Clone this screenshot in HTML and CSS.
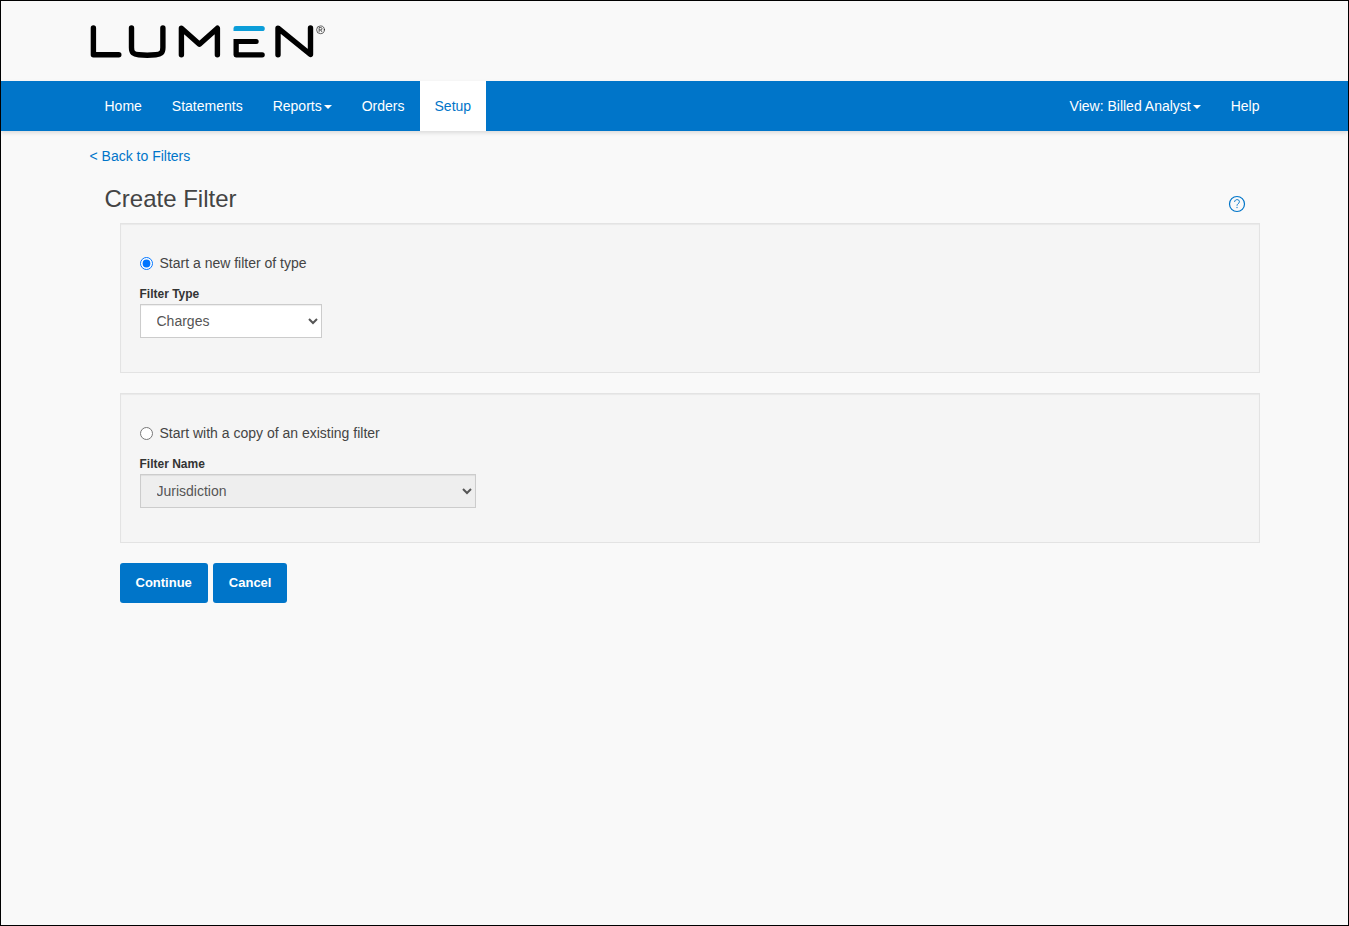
FILE: index.html
```html
<!DOCTYPE html>
<html lang="en">
<head>
<meta charset="utf-8">
<meta name="viewport" content="width=device-width, initial-scale=1">
<title>Create Filter</title>
<link rel="stylesheet" href="styles.css">
</head>
<body class="page">
<header class="masthead">
  <div class="container">
    <a class="brand" href="#" aria-label="Lumen">
      <svg class="brand-logo" width="236" height="38" viewBox="90 22 236 38" fill="none" stroke="#000" stroke-width="5.4" stroke-linecap="round" stroke-linejoin="round">
        <path d="M93.4 28V54.8H118.8"/>
        <path d="M131.5 28V47.5C131.5 53 133.7 54.2 138.7 54.8C144.2 55.4 150.2 55.4 155.7 54.8C160.7 54.2 162.9 53 162.9 47.5V28"/>
        <path d="M181.4 54.7V28.2L199.4 44.3L217.4 28.2V54.7"/>
        <path stroke="none" fill="#000" d="M233.5 39H256.2A2.4 2.4 0 0 1 256.2 44H238.8V52.2H262.2A2.6 2.6 0 0 1 262.2 57.4H236A2.5 2.5 0 0 1 233.5 55Z"/>
        <path stroke="none" fill="#0c9ed9" d="M236 25.9H262.2A2.5 2.5 0 0 1 262.2 31.1H233.5V28.5A2.5 2.5 0 0 1 236 25.9Z"/>
        <path d="M278 54.7V28.2L310.5 54.5V28"/>
        <circle cx="320.5" cy="29.8" r="3.9" stroke-width=".6"/>
        <path d="M319.1 32.2V27.5H320.8C322.5 27.5 322.5 29.9 320.8 29.9H319.1M320.7 29.9L322.1 32.2" stroke-width=".6" stroke-linecap="butt"/>
      </svg>
    </a>
  </div>
</header>
<nav class="navbar" aria-label="Main">
  <div class="container navbar-inner">
    <ul class="nav">
      <li><a class="nav-link" href="#">Home</a></li>
      <li><a class="nav-link" href="#">Statements</a></li>
      <li><a class="nav-link" href="#">Reports<span class="caret"></span></a></li>
      <li><a class="nav-link" href="#">Orders</a></li>
      <li><a class="nav-link nav-link-active" href="#" aria-current="page">Setup</a></li>
    </ul>
    <ul class="nav nav-right">
      <li><a class="nav-link" href="#">View: Billed Analyst<span class="caret"></span></a></li>
      <li><a class="nav-link" href="#">Help</a></li>
    </ul>
  </div>
</nav>
<main class="container main">
  <a class="back-link" href="#">&lt; Back to Filters</a>
  <div class="title-row">
    <h1 class="title">Create Filter</h1>
    <a class="help-link" href="#" aria-label="Help">
      <svg class="help-icon" width="18" height="18" viewBox="0 0 18 18" fill="none" stroke="#0075c9">
        <circle cx="9" cy="9" r="7.5" stroke-width="1.2"/>
        <path d="M6.6 6.9C6.7 3.9 11.4 3.9 11.4 6.7C11.4 8.6 9 8.6 9 10.7M9 11.9V13.1" stroke-width="1"/>
      </svg>
    </a>
  </div>
  <form class="filter-form">
    <section class="panel">
      <label class="choice" for="start-new"><input class="radio" type="radio" id="start-new" name="start" checked>Start a new filter of type</label>
      <label class="field-label" for="filter-type">Filter Type</label>
      <select class="select select-type" id="filter-type"><option>Charges</option></select>
    </section>
    <section class="panel">
      <label class="choice" for="start-copy"><input class="radio" type="radio" id="start-copy" name="start">Start with a copy of an existing filter</label>
      <label class="field-label" for="filter-name">Filter Name</label>
      <select class="select select-name" id="filter-name" disabled><option>Jurisdiction</option></select>
    </section>
    <div class="actions">
      <button class="button" type="button">Continue</button>
      <button class="button" type="button">Cancel</button>
    </div>
  </form>
</main>
</body>
</html>
```

FILE: styles.css
```css
* {
  box-sizing: border-box;
}

.page {
  margin: 0;
  min-height: 100vh;
  border: 1px solid #000;
  background: #f9f9f9;
  color: #444;
  font-family: "Liberation Sans", Arial, sans-serif;
  font-size: 14px;
  line-height: 20px;
}

.container {
  max-width: 1170px;
  margin: 0 auto;
}

.masthead {
  padding: 21px 0;
}

.brand,
.brand-logo {
  display: block;
}

.brand {
  width: 236px;
}

.navbar {
  background: #0075c9;
  box-shadow: 0 2px 4px rgba(0, 0, 0, 0.12);
}

.navbar-inner {
  display: flex;
  justify-content: space-between;
}

.nav {
  display: flex;
  margin: 0;
  padding: 0;
  list-style: none;
}

.nav-right {
  margin-right: -15px;
}

.nav-link {
  display: flex;
  align-items: center;
  gap: 2px;
  padding: 15px;
  color: #fff;
  text-decoration: none;
}

.nav-link-active {
  background: #fff;
  color: #0075c9;
}

.caret {
  border: 4px solid transparent;
  border-top-color: currentColor;
  border-bottom: 0;
  margin-top: 2px;
}

.main {
  padding: 15px 0;
}

.back-link {
  color: #0075c9;
  text-decoration: none;
}

.title-row {
  display: flex;
  justify-content: space-between;
  align-items: flex-end;
  margin-top: 17px;
  padding: 0 14px 8px 15px;
}

.title {
  margin: 0;
  font-size: 24px;
  line-height: 32px;
  font-weight: 400;
}

.help-link {
  padding-bottom: 2px;
}

.help-icon {
  display: block;
}

.filter-form {
  padding-left: 30px;
}

.panel {
  display: flex;
  flex-direction: column;
  align-items: flex-start;
  margin-bottom: 20px;
  padding: 29px 19px 34px;
  border: 1px solid #e3e3e3;
  background: #f5f5f5;
  box-shadow: inset 0 1px 1px rgba(0, 0, 0, 0.05);
}

.choice {
  display: flex;
  align-items: center;
  gap: 7px;
}

.radio {
  width: 13px;
  height: 13px;
  margin: 0;
}

.field-label {
  margin-top: 11px;
  color: #333;
  font-size: 12px;
  font-weight: 700;
}

.select {
  height: 34px;
  padding: 6px 0 6px 12px;
  border: 1px solid #ccc;
  border-radius: 0;
  background-color: #fff;
  box-shadow: inset 0 1px 1px rgba(0, 0, 0, 0.07);
  color: #555;
  font: inherit;
}

.select:disabled {
  background-color: #eee;
  opacity: 1;
}

.select-type {
  width: 182px;
}

.select-name {
  width: 336px;
}

.actions {
  display: flex;
  gap: 5px;
}

.button {
  height: 40px;
  padding: 0 16px;
  border: 0;
  border-radius: 3px;
  background: #0075c9;
  color: #fff;
  font: inherit;
  font-size: 13px;
  font-weight: 700;
}
```
